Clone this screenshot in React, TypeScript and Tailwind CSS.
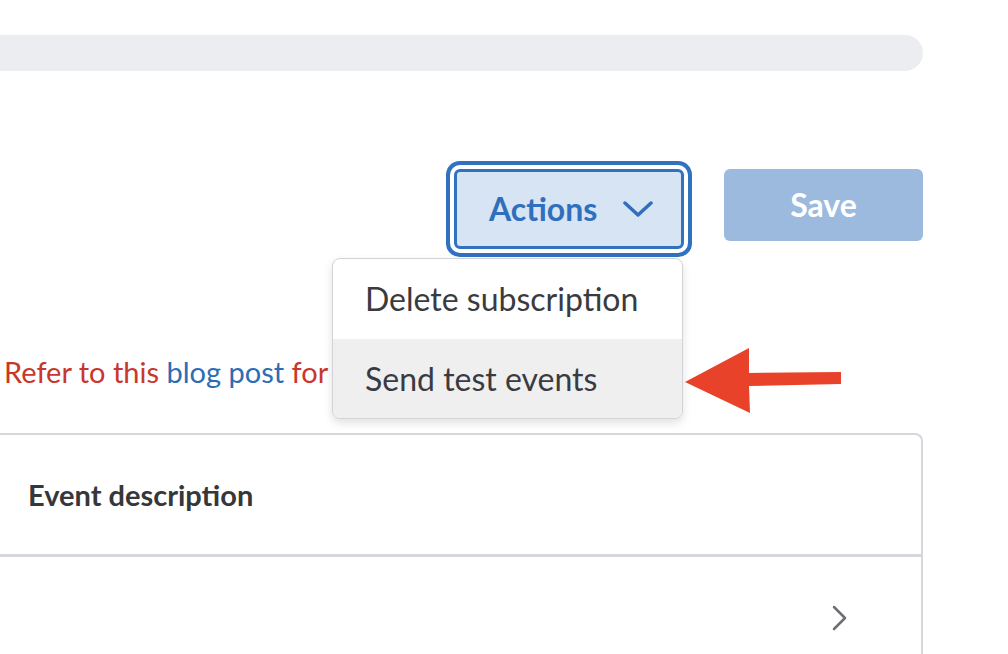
import React from "react";

export default function App() {
  return (
    <div
      className="relative w-[1008px] h-[654px] overflow-hidden bg-white"
      style={{ fontFamily: "Lato, 'Open Sans', sans-serif" }}
    >
      <div className="w-[923px] pt-[35px]">
        {/* search / progress bar */}
        <div className="h-[36px] w-full rounded-r-full bg-[#ecedf0]" />

        {/* buttons row */}
        <div className="mt-[98px] flex items-start justify-end gap-[40px]">
          <div className="relative">
            <button className="flex h-[80px] w-[230px] items-center rounded-[6px] border-[3px] border-[#3172c0] bg-[#d6e4f3] pl-[32px] pr-[28px] text-[32px] font-bold text-[#2f6fbd] ring-4 ring-[#3172c0] ring-offset-4 ring-offset-white">
              <span>Actions</span>
              <svg
                className="ml-auto"
                width="30"
                height="18"
                viewBox="0 0 30 18"
                fill="none"
                stroke="#2f6fbd"
                strokeWidth="3.5"
                strokeLinecap="round"
                strokeLinejoin="round"
              >
                <polyline points="2,3 15,15 28,3" />
              </svg>
            </button>
            {/* dropdown */}
            <div className="absolute right-[1px] top-[89px] z-10 w-[351px] overflow-hidden rounded-[8px] border-[1.5px] border-[#d3d4d9] bg-white shadow-[0_4px_10px_rgba(0,0,0,0.12)]">
              <div className="flex h-[80px] items-center pl-[32px] text-[32px] text-[#3a3b40]">
                Delete subscription
              </div>
              <div className="flex h-[79px] items-center bg-[#efeff0] pl-[32px] text-[32px] text-[#3a3b40]">
                Send test events
              </div>
            </div>
          </div>
          <button className="h-[72px] w-[199px] rounded-[6px] bg-[#9bbade] text-[32px] font-bold text-white">
            Save
          </button>
        </div>

        {/* info text */}
        <p className="mt-[106px] pl-[4px] text-[29px] leading-[34px] text-[#c9372c]">
          Refer to this <span className="text-[#2d6db5]">blog post</span> for
        </p>

        {/* card */}
        <div className="mt-[44px] rounded-tr-[8px] border-r-2 border-t-2 border-[#d6d7dc]">
          <div className="flex h-[119px] items-center pl-[28px] text-[29px] font-bold text-[#36373b]">
            Event description
          </div>
          <div className="h-[3px] bg-[#d6d7dc]" />
          <div className="flex h-[150px] items-start justify-end pr-[72px] pt-[48px]">
            <svg
              width="18"
              height="26"
              viewBox="0 0 18 26"
              fill="none"
              stroke="#6d6e74"
              strokeWidth="2.5"
              strokeLinecap="round"
              strokeLinejoin="round"
            >
              <polyline points="3,2 14,13 3,24" />
            </svg>
          </div>
        </div>
      </div>

      {/* annotation arrow */}
      <svg
        className="absolute left-[680px] top-[340px]"
        width="170"
        height="80"
        viewBox="0 0 170 80"
      >
        <polygon
          points="5,42 69,8 69,33 161,32 161,44 69,46 70,73"
          fill="#e8432a"
        />
      </svg>
    </div>
  );
}
